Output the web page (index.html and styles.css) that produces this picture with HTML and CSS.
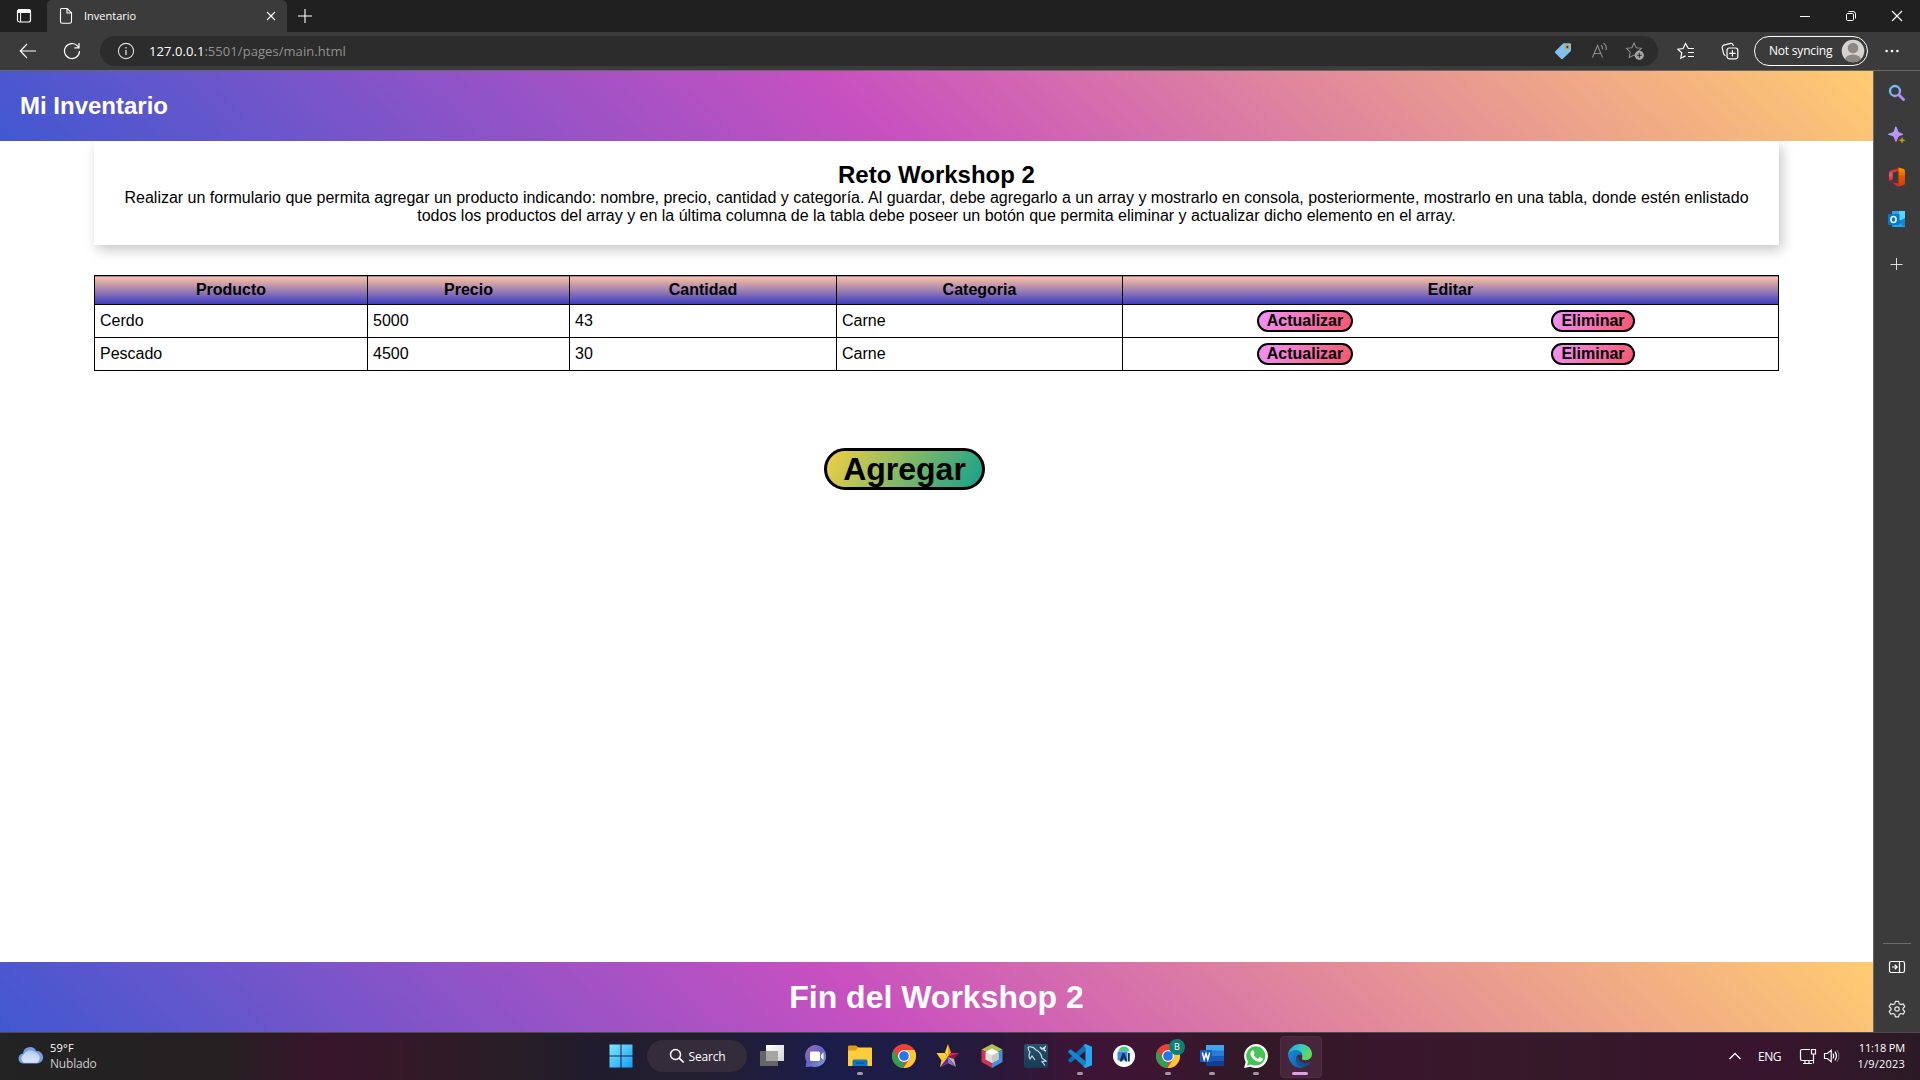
FILE: index.html
```html
<!DOCTYPE html>
<html lang="es">
<head>
<meta charset="utf-8">
<title>Inventario</title>
<link rel="stylesheet" href="styles.css">
</head>
<body>
<div class="screen">
  <div class="titlebar">
    <div class="slot slot-tabs"><svg width="16" height="16" viewBox="0 0 16 16"><rect x="1.5" y="1.5" width="13" height="12.5" rx="2" fill="none" stroke="#fff" stroke-width="1.2"/><path d="M1.5 2.5q0-1 1-1h11q1 0 1 1V5h-13z" fill="#fff"/><path d="M4.6 5v9" stroke="#fff"/></svg></div>
    <div class="tab">
      <svg width="14" height="18" viewBox="0 0 14 18"><path d="M2.5 1.5h5.7l4.3 4.3v8.7a1.8 1.8 0 0 1-1.8 1.8H3.3a1.8 1.8 0 0 1-1.8-1.8V2.8q0-1.3 1-1.3zM8 1.5V6h4.5" fill="none" stroke="#fff" stroke-width="1.1"/></svg>
      <span class="tab-title">Inventario</span>
      <svg class="tab-close" width="10" height="10" viewBox="0 0 10 10"><path d="M1 1l8 8M9 1l-8 8" stroke="#fff" stroke-width="1.2"/></svg>
    </div>
    <div class="slot slot-new"><svg width="16" height="16" viewBox="0 0 16 16"><path d="M8 1v14M1 8h14" stroke="#fff" stroke-width="1.1"/></svg></div>
    <div class="window-controls">
      <div class="slot"><svg width="12" height="12" viewBox="0 0 12 12"><path d="M1 6.5h10" stroke="#fff"/></svg></div>
      <div class="slot"><svg width="12" height="12" viewBox="0 0 12 12"><rect x="1.5" y="3.5" width="7" height="7" rx="1.2" fill="none" stroke="#fff"/><path d="M3.5 1.5H8a2.5 2.5 0 0 1 2.5 2.5v4.5" fill="none" stroke="#fff"/></svg></div>
      <div class="slot"><svg width="12" height="12" viewBox="0 0 12 12"><path d="M1 1l10 10M11 1L1 11" stroke="#fff" stroke-width="1.2"/></svg></div>
    </div>
  </div>

  <div class="toolbar">
    <div class="slot slot-nav back"><svg width="18" height="16" viewBox="0 0 18 16"><path d="M17 8H1.5M8 1L1.3 8 8 15" fill="none" stroke="#fff" stroke-width="1.2"/></svg></div>
    <div class="slot slot-nav"><svg width="18" height="18" viewBox="0 0 18 18"><path d="M16.5 9a7.5 7.5 0 1 1-2-5.1l1.5 1.6M16 1v4.8h-4.6" fill="none" stroke="#fff" stroke-width="1.2"/></svg></div>
    <div class="address">
      <svg width="18" height="18" viewBox="0 0 18 18"><circle cx="9" cy="9" r="7.6" fill="none" stroke="#ddd" stroke-width="1.1"/><path d="M9 8v5M9 5v1.4" stroke="#ddd" stroke-width="1.3"/></svg>
      <span class="url"><b>127.0.0.1</b>:5501/pages/main.html</span>
      <div class="address-icons">
        <div class="slot"><svg width="18" height="18" viewBox="0 0 18 18"><path d="M9.300 1.200h6.300q1.400 0 1.400 1.400v5.600q0 .8-.6 1.400L9.200 16.400q-1.200 1.200-2.400 0L1.500 11.300q-1.200-1.200 0-2.400z" fill="#83beec"/><circle cx="13.300" cy="5" r="2.200" fill="#c79a12"/><circle cx="13.300" cy="5" r=".9" fill="#40331a"/></svg></div>
        <div class="slot"><svg width="18" height="18" viewBox="0 0 18 18"><path d="M2.500 15.500L7.500 3.500l5 12M4.300 11.500h6.500M11 3q2 1.600 1.500 4.500M13.500 1q3.500 2.500 2.700 7" fill="none" stroke="#8b8b8b" stroke-width="1.100"/></svg></div>
        <div class="slot"><svg width="20" height="20" viewBox="0 0 20 20"><path d="M9 2l2.100 4.700 5.400.6-4 3.700 1 5.400L9 14l-4.800 2.500 1-5.400-3.700-3.800 5.400-.6z" fill="none" stroke="#8b8b8b" stroke-width="1.100"/><circle cx="14.300" cy="14.300" r="4.600" fill="#a6a6a6"/><path d="M14.300 11.800v5M11.800 14.300h5" stroke="#2c2c2c" stroke-width="1.100"/></svg></div>
      </div>
    </div>
    <div class="slot slot-fav"><svg width="18" height="18" viewBox="0 0 18 18"><path d="M17 6.500h-5.600L8.500 1.500 6.100 6.500.9 7.200l3.800 3.600-.9 5.500 4.700-2.400M11 10.500h6M11 14.500h6" fill="none" stroke="#fff" stroke-width="1.200"/></svg></div>
    <div class="slot slot-col"><svg width="18" height="18" viewBox="0 0 18 18"><rect x="6" y="6" width="10.800" height="10.800" rx="2.200" fill="none" stroke="#fff" stroke-width="1.200"/><path d="M11.400 8.200v6.400M8.200 11.400h6.400M4.500 13.500Q3 13 2.500 11.300L1.200 5.600Q1 3.700 2.800 3.100L9.600 1.300q1.800-.3 2.400 1.400l.3 1.300" fill="none" stroke="#fff" stroke-width="1.200"/></svg></div>
    <div class="profile"><span>Not syncing</span><svg width="24" height="24" viewBox="0 0 24 24"><defs><clipPath id="av"><circle cx="12" cy="12" r="11.300"/></clipPath></defs><circle cx="12" cy="12" r="11.300" fill="#d5d2cf"/><g clip-path="url(#av)" fill="#8c8885"><circle cx="12" cy="9" r="5.300"/><ellipse cx="12" cy="21" rx="8" ry="5.500"/></g></svg></div>
    <div class="slot slot-more"><svg width="14" height="4" viewBox="0 0 14 4"><g fill="#fff"><circle cx="1.600" cy="2" r="1.300"/><circle cx="7" cy="2" r="1.300"/><circle cx="12.400" cy="2" r="1.300"/></g></svg></div>
  </div>

  <div class="content">
    <div class="page">
      <header class="site-header"><h1>Mi Inventario</h1></header>
      <main>
        <section class="card">
          <h2>Reto Workshop 2</h2>
          <p>Realizar un formulario que permita agregar un producto indicando: nombre, precio, cantidad y categoría. Al guardar, debe agregarlo a un array y mostrarlo en consola, posteriormente, mostrarlo en una tabla, donde estén enlistado todos los productos del array y en la última columna de la tabla debe poseer un botón que permita eliminar y actualizar dicho elemento en el array.</p>
        </section>
        <table>
          <colgroup><col class="c1"><col class="c2"><col class="c3"><col class="c4"><col class="c5"></colgroup>
          <thead><tr><th>Producto</th><th>Precio</th><th>Cantidad</th><th>Categoria</th><th>Editar</th></tr></thead>
          <tbody>
            <tr><td>Cerdo</td><td>5000</td><td>43</td><td>Carne</td><td><div class="actions"><button class="update">Actualizar</button><button class="delete">Eliminar</button></div></td></tr>
            <tr><td>Pescado</td><td>4500</td><td>30</td><td>Carne</td><td><div class="actions"><button class="update">Actualizar</button><button class="delete">Eliminar</button></div></td></tr>
          </tbody>
        </table>
        <button class="add">Agregar</button>
      </main>
      <footer class="site-footer"><h2>Fin del Workshop 2</h2></footer>
    </div>

    <aside class="sidebar">
      <div class="side-slot"><svg width="18" height="18" viewBox="0 0 18 18"><defs><linearGradient id="mg" x2="1" y2="1"><stop stop-color="#5fc8f5"/><stop offset=".6" stop-color="#82b5fa"/><stop offset="1" stop-color="#c48bf5"/></linearGradient></defs><circle cx="7" cy="7" r="5" fill="none" stroke="url(#mg)" stroke-width="2.300"/><path d="M11.500 11.500l4 4" stroke="#b48cf5" stroke-width="3" stroke-linecap="round"/></svg></div>
      <div class="side-slot"><svg width="18" height="18" viewBox="0 0 18 18"><defs><linearGradient id="sp" x2="1" y2="1"><stop stop-color="#9bb5fa"/><stop offset="1" stop-color="#ca7cf5"/></linearGradient></defs><path d="M7.500.500q1 0 1.300 1l1.200 3.300q.4 1.300 1.700 1.800l3.200 1.100q.8.500 0 1l-3.200 1.200q-1.300.500-1.700 1.800l-1.300 3.500q-.8 1.200-1.400 0L6 11.700q-.4-1.300-1.700-1.800L.500 8.700q-1-.5 0-1l3.800-1.200q1.300-.500 1.700-1.700L7 1.500q.1-1 .5-1z" fill="url(#sp)"/><path d="M14 10.700l1.100 2.500 2.700 1-2.700 1-1.100 2.600-1-2.600-2.700-1 2.700-1z" fill="#c99612"/></svg></div>
      <div class="side-slot"><svg width="18" height="20" viewBox="0 0 18 20"><defs><linearGradient id="of" x2="0" y2="1"><stop stop-color="#a81d0a"/><stop offset=".5" stop-color="#ee5979"/><stop offset="1" stop-color="#e31b28"/></linearGradient><linearGradient id="or" x2="0" y2="1"><stop stop-color="#ff9b00"/><stop offset=".5" stop-color="#e75200"/><stop offset="1" stop-color="#d83b01"/></linearGradient></defs><path d="M10.500.500L2.500 3.500Q1 4.200 1 6v8.300l3.700-1.500V5.500l5.800-1.500z" fill="url(#of)"/><path d="M10.500.500L15.700 2q1.300.5 1.300 2v12q0 1.400-1.300 1.900L10.500 19.500z" fill="url(#or)"/><path d="M3.800 15.500l6.700.8v3.200q-1 0-1.600-.4z" fill="#e81d38"/></svg></div>
      <div class="side-slot"><svg width="18" height="18" viewBox="0 0 18 18"><path d="M4 1h13v16H4z" fill="#1490df"/><path d="M4 1h13v6H4z" fill="#28a8ea"/><path d="M11 1h6v9h-6z" fill="#50d9ff"/><path d="M4 17h13V8z" fill="#1aaaf0"/><path d="M10 12l7 5V8z" fill="#1684d0"/><rect y="4" width="11.500" height="11" rx="1" fill="#0078d4"/><ellipse cx="5.500" cy="9.500" rx="2.600" ry="3" fill="none" stroke="#fff" stroke-width="1.500"/></svg></div>
      <div class="side-slot plus"><svg width="14" height="14" viewBox="0 0 14 14"><path d="M6.500 1v12M.500 7.500h12" stroke="#ddd"/></svg></div>
      <div class="side-bottom">
        <div class="side-slot"><svg width="18" height="14" viewBox="0 0 18 14"><rect x="1.500" y="1.500" width="15" height="11" rx="1.800" fill="none" stroke="#fff" stroke-width="1.200"/><path d="M11.500 1.500v11M4 7h5M6.800 4.700L9.200 7 6.800 9.300" fill="none" stroke="#fff" stroke-width="1.200"/></svg></div>
        <div class="side-slot"><svg width="18" height="18" viewBox="0 0 18 18"><path d="M7.400 1.300h3.200l.6 2.400 1.600.9 2.400-.7 1.600 2.700L15 8.300v1.500l1.800 1.700-1.600 2.700-2.400-.7-1.600.9-.6 2.400H7.400l-.6-2.400-1.600-.9-2.400.7-1.600-2.700L3 9.800V8.300L1.200 6.600l1.600-2.700 2.400.7 1.600-.9z" fill="none" stroke="#e8e8e8" stroke-width="1.200" stroke-linejoin="round"/><circle cx="9" cy="9" r="2.200" fill="none" stroke="#e8e8e8" stroke-width="1.200"/></svg></div>
      </div>
    </aside>
  </div>

  <div class="taskbar">
    <div class="weather">
      <svg width="26" height="20" viewBox="0 0 26 20"><defs><linearGradient id="cl" x2="0" y2="1"><stop stop-color="#b2cdf9"/><stop offset="1" stop-color="#dfe9fb"/></linearGradient></defs><path d="M6 18.500a5 5 0 0 1-1-10A7 7 0 0 1 18.300 6a6.200 6.200 0 0 1 1.200 12.500z" fill="#779de8"/><path d="M6 17.700a4.600 4.600 0 0 1 0-8.400 7 6 0 0 1 12-1.600 5.600 5.600 0 0 1 1 10z" fill="url(#cl)"/></svg>
      <div><div class="temp">59°F</div><div class="cond">Nublado</div></div>
    </div>
    <div class="apps">
      <div class="app"><svg width="24" height="24" viewBox="0 0 24 24"><defs><linearGradient id="wn" x2="1" y2="1"><stop stop-color="#7feaff"/><stop offset="1" stop-color="#149cfb"/></linearGradient></defs><path d="M.500.500h11v11H.500zM12.500.500h11v11h-11zM.500 12.500h11v11H.500zM12.500 12.500h11v11h-11z" fill="url(#wn)"/></svg></div>
      <div class="search"><svg width="16" height="16" viewBox="0 0 16 16"><circle cx="6.500" cy="6.500" r="5" fill="none" stroke="#fff" stroke-width="1.500"/><path d="M10.200 10.200l4.500 4.300" stroke="#fff" stroke-width="1.700"/></svg><span>Search</span></div>
      <div class="app"><svg width="24" height="24" viewBox="0 0 24 24"><defs><linearGradient id="tv" x2="1" y2="1"><stop stop-color="#fff"/><stop offset="1" stop-color="#d4d4d4"/></linearGradient></defs><path d="M6 1h18v16H6z" fill="url(#tv)"/><path d="M0 7h18v15H0z" fill="#666"/><path d="M6 7h12v10H6z" fill="#a5a5a5"/></svg></div>
      <div class="app"><svg width="24" height="24" viewBox="0 0 24 24"><defs><linearGradient id="ch" x2="1" y2="1"><stop stop-color="#a868b5"/><stop offset=".5" stop-color="#6264c7"/><stop offset="1" stop-color="#83a5df"/></linearGradient></defs><path d="M12 1a11 11 0 1 1-4 21.500L1.500 23l1-5.500A11 11 0 0 1 12 1z" fill="url(#ch)"/><rect x="6" y="7.500" width="10" height="9.500" rx="1.500" fill="#fff"/><path d="M17 11l2.500-2.500v7.500L17 13.500z" fill="#fff"/></svg></div>
      <div class="app run"><svg width="24" height="24" viewBox="0 0 24 24"><path d="M0 2.500q0-1 1-1h7l3 2.500v5H0z" fill="#dc9c0d"/><path d="M0 6.500h8l2-3h13q1 0 1 1V22H0z" fill="#ffcd3b"/><path d="M4.500 22v-5q0-1.500 1.500-1.500h12q1.500 0 1.500 1.500v5z" fill="#1175c6"/><path d="M8 19h8" stroke="#0a4c8a" stroke-width="1.200"/></svg></div>
      <div class="app"><svg width="24" height="24" viewBox="0 0 24 24"><circle cx="12" cy="12" r="12" fill="#ea4335"/><path d="M1.600 6L6.800 15A6 6 0 0 0 12 18l-.5 6A12 12 0 0 1 1.600 6z" fill="#2f9e50"/><path d="M12 6h10.400A12 12 0 0 1 11.500 24L17.200 15a6 6 0 0 0-5.200-9z" fill="#fcc934"/><circle cx="12" cy="12" r="6" fill="#fff"/><circle cx="12" cy="12" r="4.800" fill="#2476ed"/></svg></div>
      <div class="app"><svg width="24" height="24" viewBox="0 0 24 24"><path d="M12 0l3 8.500L12 13z" fill="#e8a814"/><path d="M12 0L9 8.500l3 4.500z" fill="#ffdf35"/><path d="M.500 9H9l3 4-6.500 3.500z" fill="#ffce2c"/><path d="M23.500 9H15l-3 4z" fill="#e72057"/><path d="M23.500 9L18 15l-6-2z" fill="#8c1839"/><path d="M18 15l2 8-8-10z" fill="#b8b8b8"/><path d="M12 13l8 10-8-4z" fill="#777"/><path d="M12 13v6l-8 4 1.500-7z" fill="#ffc52a"/><path d="M12 13v6l-8 4z" fill="#5b23a6"/><path d="M12 13l5 8.500-5-2.500z" fill="#a064e9"/></svg></div>
      <div class="app"><svg width="24" height="24" viewBox="0 0 24 24"><path d="M12 0l10.500 5.500L12 11 1.500 5.500z" fill="#adc34c"/><path d="M1.500 5.500L12 11v13L1.500 18z" fill="#cc3454"/><path d="M22.500 5.500L12 11v13l10.500-6z" fill="#438fd8"/><path d="M12 4.500l6.500 3.700v7.300L12 19l-6.500-3.500V8.200z" fill="#ddd"/><path d="M12 4.500l6.500 3.700L12 11.500 5.500 8.200z" fill="#fff"/><path d="M12 11.500V19l6.500-3.500V8.200z" fill="#c5c8c3"/></svg></div>
      <div class="app"><svg width="24" height="24" viewBox="0 0 24 24"><defs><linearGradient id="my" x2="0" y2="1"><stop stop-color="#28536f"/><stop offset="1" stop-color="#153b55"/></linearGradient></defs><rect width="24" height="24" rx="2" fill="url(#my)"/><path d="M4 3q5-1 8 3 5 2 6 8l4 3-4 .5 3 4M4 3q0 3 2 5-2 4 0 7l2-3 3 4" fill="none" stroke="#d5e4ed" stroke-width="1.100"/><path d="M16 3l2 2 3-2-1 3 2 1" fill="none" stroke="#d5e4ed" stroke-width="1.400"/></svg></div>
      <div class="app run"><svg width="24" height="24" viewBox="0 0 24 24"><path d="M17.500 0v7L3 18.500q-.7.400-1.300-.2L.3 16.800q-.5-.7 0-1.200z" fill="#0b70b8"/><path d="M17.500 24v-7L3 5.500q-.7-.4-1.300.2L.3 7.200q-.5.700 0 1.200z" fill="#1387cb"/><path d="M17.500 0L24 2.800v18.400L17.500 24l-2-1 2-3V4l-2-3z" fill="#29a7f1"/></svg></div>
      <div class="app"><svg width="24" height="24" viewBox="0 0 24 24"><circle cx="12" cy="12" r="11" fill="#fff"/><path d="M6.500 7.500a5.500 5 0 0 1 11 0z" fill="#4cca86"/><rect x="5.500" y="7.500" width="10" height="9" rx="1" fill="#3a86f0"/><path d="M7.500 17.500L10.500 9h2l3 8.500h-2L12 14l-2 3.500zM16 9h1.800v8.500H16z" fill="#153454"/></svg></div>
      <div class="app run"><svg width="24" height="24" viewBox="0 0 24 24"><circle cx="12" cy="12" r="12" fill="#ea4335"/><path d="M1.600 6L6.800 15A6 6 0 0 0 12 18l-.5 6A12 12 0 0 1 1.600 6z" fill="#2f9e50"/><path d="M12 6h10.400A12 12 0 0 1 11.500 24L17.200 15a6 6 0 0 0-5.200-9z" fill="#fcc934"/><circle cx="12" cy="12" r="6" fill="#fff"/><circle cx="12" cy="12" r="4.800" fill="#2476ed"/></svg><span class="badge">B</span></div>
      <div class="app run"><svg width="24" height="24" viewBox="0 0 24 24"><path d="M6 1h18v6H6z" fill="#41a5ee"/><path d="M6 6.500h18V12H6z" fill="#2b7cd3"/><path d="M6 12h18v5.500H6z" fill="#185abd"/><path d="M6 17.500h18V22H6z" fill="#103f91"/><rect y="6" width="12" height="12" rx="1" fill="#195abe"/><path d="M2.300 8.500l1.900 7L6 9.500l1.800 6 1.900-7" fill="none" stroke="#fff" stroke-width="1.500"/></svg></div>
      <div class="app run"><svg width="26" height="26" viewBox="0 0 26 26"><path d="M13 1a12 12 0 1 1-5.500 22.700L1 25l1.700-6A12 12 0 0 1 13 1z" fill="#fff"/><path d="M13 3.200a9.700 9.700 0 1 1-5 18.200l-4 1 1-3.900A9.700 9.700 0 0 1 13 3.200z" fill="#42c554"/><path d="M9 7.500q1-.8 1.600.3l1 2.200q.2.700-.9 1.900 1.300 2.800 4.300 4l1.400-1.600q.5-.4 1 0l2.300 1.200q.5.500-.3 2-1.500 1.800-4 1.300-6-1.700-8-7.300-.4-2.500 1.600-4z" fill="#fff"/></svg></div>
      <div class="app active"><svg width="24" height="24" viewBox="0 0 24 24"><defs><linearGradient id="e1" x2="1" y2=".4"><stop stop-color="#229ddd"/><stop offset=".5" stop-color="#31c9c9"/><stop offset="1" stop-color="#64d956"/></linearGradient><linearGradient id="e2" x2="1" y2="1"><stop stop-color="#1b8cd8"/><stop offset="1" stop-color="#0d58a5"/></linearGradient></defs><path d="M0 11C1 4 6 0 12.200 0 20 0 24 5.500 24 10c0 4-3 6.200-6.500 6.200-2.500 0-4-.9-3.500-2C15 12 14 8 9 7.500 5 7 2 9 0 11z" fill="url(#e1)"/><path d="M0 12C.500 8 4 6 8.500 6c4 .3 6 3 5.800 5.500C12 9.500 8 11 8 15c0 4.500 5 7.500 9 6.500Q14.500 24 12 24 3 23.500 0 12z" fill="url(#e2)"/><path d="M8 15c0-2 .9-3.500 2.300-4.200Q9 14 12 17q4.500 4 10.500.5c.5 0 .6.400.4.700Q21 21 17 22.800C12 23 8 20 8 15z" fill="#174f91"/></svg></div>
    </div>
    <div class="tray">
      <svg width="14" height="8" viewBox="0 0 14 8"><path d="M1.500 7L7 1.500 12.500 7" fill="none" stroke="#fff" stroke-width="1.300"/></svg>
      <span class="lang">ENG</span>
      <svg class="net" width="18" height="18" viewBox="0 0 18 18"><path d="M11 2.500H3A1.500 1.500 0 0 0 1.500 4v8A1.500 1.500 0 0 0 3 13.500h11M6 13.500v3M10 13.500v3M4 16.500h9M12.500 2.500h4V7h-4zM14.500 7v9.500" fill="none" stroke="#fff" stroke-width="1.200"/></svg>
      <svg class="vol" width="18" height="16" viewBox="0 0 18 16"><path d="M1.500 5.500h2.800l3.900-3.300v11.600l-3.900-3.300H1.500z" fill="none" stroke="#fff" stroke-width="1.200"/><path d="M10 5.500q1.500 2.500 0 5M12 3.700q2.800 4.300 0 8.600" fill="none" stroke="#fff" stroke-width="1.200"/><path d="M14 2q4 6 0 12" fill="none" stroke="#776570" stroke-width="1.200"/></svg>
      <div class="clock"><div class="time">11:18 PM</div><div class="date">1/9/2023</div></div>
    </div>
  </div>
</div>
</body>
</html>
```
FILE: styles.css
```css
* { box-sizing: border-box; margin: 0; padding: 0; }
body { font-family: "Liberation Sans", Arial, sans-serif; font-size: 16px; overflow: hidden; }
svg { display: block; flex: none; }
.screen { width: 1920px; height: 1080px; display: flex; flex-direction: column; }
.titlebar, .toolbar, .taskbar { font-family: "Open Sans", "Noto Sans", sans-serif; font-size: 12px; color: #fff; white-space: nowrap; }
.slot { display: flex; align-items: center; justify-content: center; }

/* window title bar */
.titlebar { height: 32px; display: flex; background: #202020; }
.slot-tabs { width: 47px; }
.tab { width: 240px; display: flex; align-items: center; padding: 0 11px 0 12px; background: #3b3b3b; border-radius: 5px 5px 0 0; }
.tab-title { margin: -1px 0 0 11px; font-size: 11px; letter-spacing: 0; }
.tab-close { margin-left: auto; }
.slot-new { width: 35px; }
.window-controls { margin-left: auto; display: flex; }
.window-controls .slot { width: 46px; }

/* navigation bar */
.toolbar { height: 39px; display: flex; align-items: center; padding-bottom: 1px; background: #3b3b3b; border-bottom: 1px solid #686868; }
.slot-nav { width: 44px; }
.back { margin-left: 6px; }
.address { width: 1558px; height: 30px; margin-left: 6px; display: flex; align-items: center; padding: 0 5px 0 17px; background: #2c2c2c; border-radius: 15px; }
.url { margin-left: 14px; font-size: 13px; color: #929292; letter-spacing: 0.06px; }
.url b { font-weight: 400; color: #fff; }
.address-icons { margin-left: auto; display: flex; }
.address-icons .slot { width: 36px; }
.slot-fav { width: 44px; margin-left: 6px; }
.slot-col { width: 44px; }
.profile { width: 114px; height: 30px; margin-left: 2px; display: flex; align-items: center; justify-content: space-between; padding: 0 2px 0 14px; border: 1px solid #fff; border-radius: 15px; font-size: 12px; letter-spacing: -0.2px; }
.slot-more { width: 48px; }

/* web page */
.content { height: 961px; display: flex; }
.page { width: 1873px; display: flex; flex-direction: column; background: #fff; color: #000; }
.site-header, .site-footer { height: 70px; flex: none; display: flex; align-items: center; color: #fff; background: linear-gradient(43deg, #4158d0 0%, #c850c0 46%, #ffcc70 100%); }
.site-header { padding-left: 20px; position: relative; }
.site-header h1 { font-size: 24px; }
.site-footer { justify-content: center; }
.site-footer h2 { font-size: 32px; }
main { flex: 1; padding: 0 94px; }
.card { height: 104px; padding: 20px 30px; text-align: center; box-shadow: 3px 5px 12px rgba(0, 0, 0, 0.22); }
.card h2 { font-size: 24px; line-height: 28px; }
.card p { line-height: 18px; }
table { width: 1685px; margin-top: 30px; border-collapse: collapse; table-layout: fixed; }
.c1 { width: 273px; }
.c2 { width: 202px; }
.c3 { width: 267px; }
.c4 { width: 286px; }
.c5 { width: 656px; }
th, td { border: 1px solid #000; }
th { height: 29px; background: linear-gradient(to bottom, #ffc3a0, #3b3bc4); }
td { height: 33px; padding: 0 5px; }
.actions { display: flex; justify-content: space-between; padding: 0 138px 0 129px; }
button { height: 22px; border: 2px solid #000; border-radius: 11px; font: bold 16px/18px "Liberation Sans", Arial, sans-serif; color: #000; background: linear-gradient(120deg, #f093fb 0%, #f5576c 100%); }
.update { width: 96px; }
.delete { width: 84px; }
.add { display: block; width: 161px; height: 42px; margin: 77px 0 0 730px; border-width: 3px; border-radius: 21px; font-size: 32px; line-height: 36px; background: linear-gradient(120deg, #f1d044 0%, #15a18a 100%); }

/* browser side bar */
.sidebar { width: 47px; display: flex; flex-direction: column; align-items: stretch; padding-top: 1px; background: #3b3b3b; border-left: 1px solid #686868; }
.side-slot { height: 42px; display: flex; align-items: center; justify-content: center; }
.side-slot.plus { height: 48px; }
.side-bottom { margin: auto 9px 2px; padding-top: 2px; border-top: 1px solid #6b6b6b; }

/* desktop task bar */
.taskbar { height: 48px; padding-bottom: 2px; display: grid; grid-template-columns: 599px 1fr auto; border-top: 1px solid #504850; background: linear-gradient(90deg, #232323 0, #241f20 220px, #38142b 325px, #341928 400px, #281e25 510px, #201c2d 590px, #231d30 700px, #1b1d49 820px, #1d1c46 900px, #26193a 980px, #3c1435 1080px, #3e1433 1150px, #311927 1240px, #3a162c 1400px, #351929 1550px, #39142e 1750px, #2b1a25 1920px); }
.weather { display: flex; align-items: center; padding-left: 18px; gap: 6px; line-height: 16px; font-size: 11px; }
.weather svg { margin-top: -2px; }
.temp { letter-spacing: 0.2px; }
.cond { color: #ccc; font-size: 12px; letter-spacing: -0.2px; }
.apps { display: flex; align-items: center; }
.app { width: 44px; height: 46px; display: flex; align-items: center; justify-content: center; position: relative; }
.search { width: 100px; height: 32px; margin: 0 3px 0 4px; display: flex; align-items: center; justify-content: center; gap: 4px; border-radius: 16px; background: #342c3b; font-size: 12px; letter-spacing: -0.2px; }
.run::after, .active::after { content: ""; position: absolute; left: 19px; bottom: 4px; width: 6px; height: 3px; border-radius: 2px; background: #a698a6; }
.active::before { content: ""; position: absolute; left: 2px; top: 3px; width: 40px; height: 40px; border: 1px solid #502d45; border-radius: 4px; background: #47253b; }
.active svg { position: relative; }
.active::after { left: 14px; width: 16px; background: #dda1e4; }
.badge { position: absolute; right: 5px; top: 6px; width: 16px; height: 16px; border-radius: 50%; background: #0e8073; font-size: 9px; line-height: 16px; text-align: center; }
.tray { display: flex; align-items: center; padding-right: 15px; }
.lang { margin-left: 16px; font-size: 12px; letter-spacing: -0.5px; }
.net { margin-left: 18px; }
.vol { margin-left: 6px; }
.clock { width: 64px; text-align: right; line-height: 16px; font-size: 11px; }
.time { letter-spacing: -0.15px; }
.date { letter-spacing: 0.2px; }
```
